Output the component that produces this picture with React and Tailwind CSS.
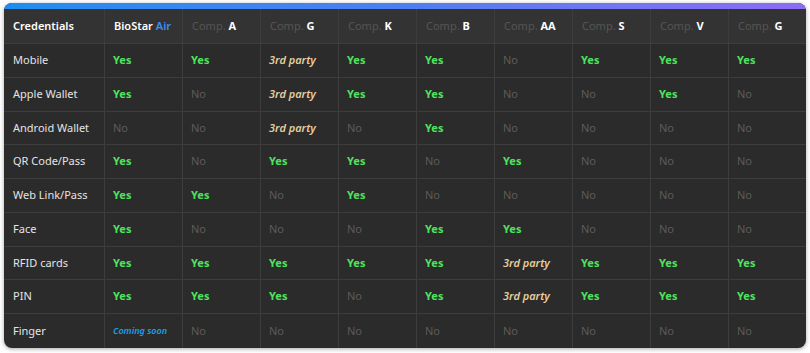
import React from 'react';

const comps = [
  ['A'], ['G'], ['K'], ['B'], ['AA'], ['S'], ['V'], ['G'],
];

const rows = [
  ['Mobile', ['y', 'y', 't', 'y', 'y', 'n', 'y', 'y', 'y']],
  ['Apple Wallet', ['y', 'n', 't', 'y', 'y', 'n', 'n', 'y', 'n']],
  ['Android Wallet', ['n', 'n', 't', 'n', 'y', 'n', 'n', 'n', 'n']],
  ['QR Code/Pass', ['y', 'n', 'y', 'y', 'n', 'y', 'n', 'n', 'n']],
  ['Web Link/Pass', ['y', 'y', 'n', 'y', 'n', 'n', 'n', 'n', 'n']],
  ['Face', ['y', 'n', 'n', 'n', 'y', 'y', 'n', 'n', 'n']],
  ['RFID cards', ['y', 'y', 'y', 'y', 'y', 't', 'y', 'y', 'y']],
  ['PIN', ['y', 'y', 'y', 'n', 'y', 't', 'y', 'y', 'y']],
  ['Finger', ['c', 'n', 'n', 'n', 'n', 'n', 'n', 'n', 'n']],
];

const Value = ({ v }) => {
  if (v === 'y') return <span className="font-bold text-[#4ee35e]">Yes</span>;
  if (v === 't') return <span className="font-semibold italic text-[#e9cf9c]">3rd party</span>;
  if (v === 'c') return <span className="font-semibold italic text-[9px] text-[#1aa0e8]">Coming soon</span>;
  return <span className="text-[#5c5c5c]">No</span>;
};

const cols = 'grid grid-cols-[100px_repeat(9,78px)]';

export default function App() {
  return (
    <div className="min-h-screen bg-white pt-[3px] pl-[4px]" style={{ fontFamily: '"Noto Sans", "Open Sans", sans-serif' }}>
      <div className="w-[802px] rounded-lg overflow-hidden bg-[#2b2b2b] shadow-[0_1px_4px_rgba(0,0,0,0.35)] text-[11px]">
        <div className="h-[6px] bg-gradient-to-r from-[#1b8ef0] via-[#4c7ff0] to-[#8a6cf2]" />
        <div className={`${cols} h-[35px] bg-[#333333] border-b border-[#3d3d3d]`}>
          <div className="flex items-center px-[9px] font-semibold text-white">Credentials</div>
          <div className="flex items-center px-[9px] font-semibold text-white border-l border-[#3d3d3d]">
            BioStar&nbsp;<span className="text-[#3d8ef2]">Air</span>
          </div>
          {comps.map(([c], i) => (
            <div key={i} className="flex items-center px-[9px] border-l border-[#3d3d3d]">
              <span className="text-[#555555]">Comp.&nbsp;</span>
              <span className="font-bold text-white">{c}</span>
            </div>
          ))}
        </div>
        {rows.map(([label, vals], r) => (
          <div key={label} className={`${cols} h-[33.75px] ${r < rows.length - 1 ? 'border-b border-[#3d3d3d]' : ''}`}>
            <div className="flex items-center px-[9px] text-[#e4e4e4]">{label}</div>
            {vals.map((v, i) => (
              <div key={i} className="flex items-center px-[8px] border-l border-[#3d3d3d]">
                <Value v={v} />
              </div>
            ))}
          </div>
        ))}
      </div>
    </div>
  );
}
